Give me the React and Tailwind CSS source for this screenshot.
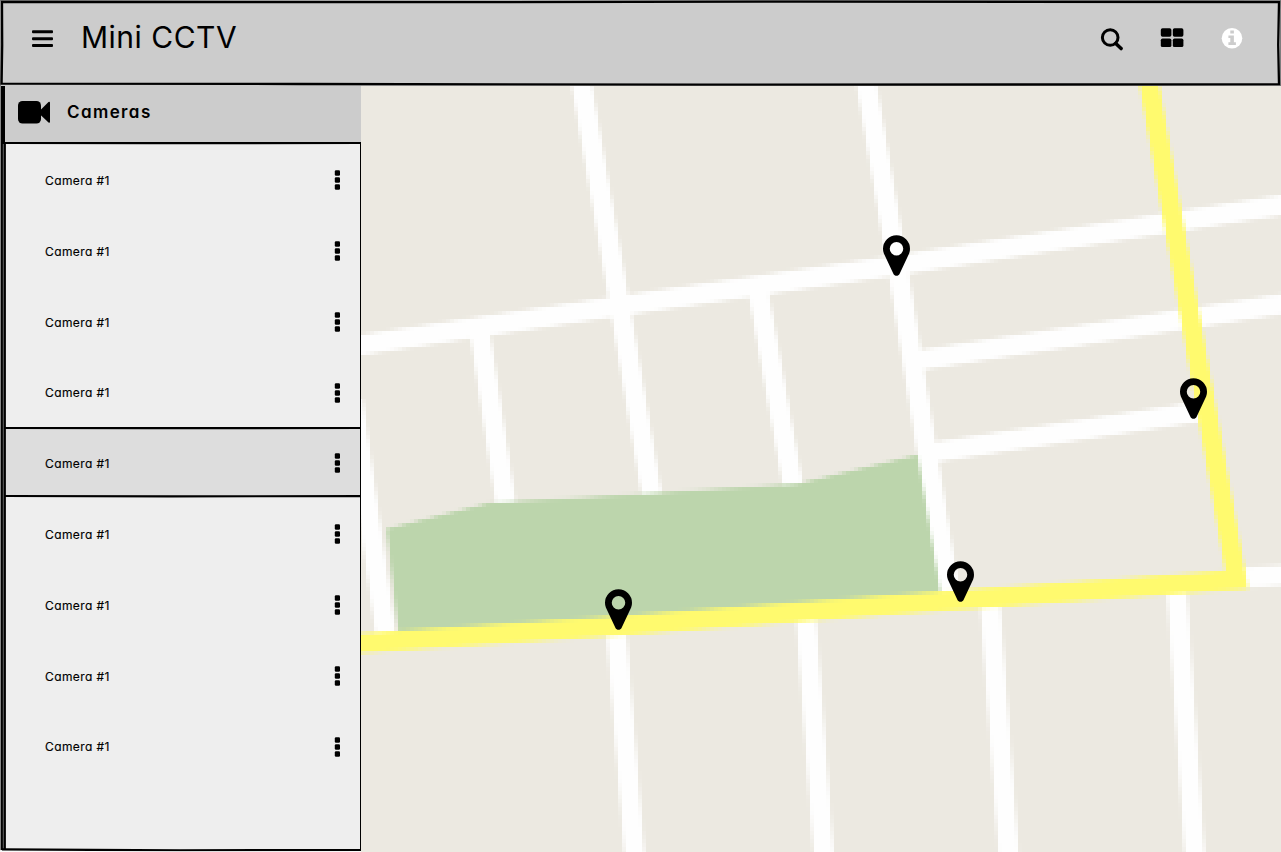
import React from "react";

const FONT = "font-['Inter','Liberation_Sans',sans-serif]";

function Pin({ className }) {
  return (
    <svg viewBox="0 -1408 1024 1536" className={"absolute h-[41px] w-[27px] " + className}>
      <path
        transform="scale(1,-1)"
        d="M768 896q0 106-75 181t-181 75-181-75-75-181 75-181 181-75 181 75 75 181zm256 0q0-109-33-179l-364-774q-16-33-47.5-52t-67.5-19-67.5 19-46.5 52l-365 774q-33 70-33 179 0 212 150 362t362 150 362-150 150-362z"
      />
    </svg>
  );
}

function Dots() {
  return (
    <svg viewBox="0 0 6 20" className="mb-px h-5 w-1.5">
      <rect width="5.2" height="5.4" rx="1.2" x=".8" y=".3" />
      <rect width="5.2" height="5.4" rx="1.2" x=".8" y="7.3" />
      <rect width="5.2" height="5.4" rx="1.2" x=".8" y="14.3" />
    </svg>
  );
}

function Row({ className }) {
  return (
    <li className={"flex items-center justify-between pl-[39px] pr-[21.5px] " + className}>
      <span className="text-[12px] leading-4 tracking-[0.4px] [-webkit-text-stroke:0.15px_black] [font-feature-settings:'cv11']">Camera #1</span>
      <Dots />
    </li>
  );
}

function Header() {
  return (
    <header className="relative flex h-[86px] shrink-0 items-start bg-[#cccccc]">
      <svg viewBox="0 0 1281 86" className="absolute inset-0 h-[86px] w-[1281px]" fill="none" stroke="#000">
        <path d="M0 .6 500 1.2 1281 .4M0 0 .4 86M1280.6 0V86" stroke="#777" strokeWidth="1" />
        <path d="M2 2 420 2.2 800 1.6 1279 2.2 1278.2 45 1279 84.4 700 84.6 300 84 1.6 83.7 2.2 45Z" strokeWidth="2.3" />
      </svg>
      <svg viewBox="0 0 21 18" className="ml-[31.5px] mt-[30px] h-[18px] w-[21px]">
        <rect width="21" height="3" y=".2" rx="1" />
        <rect width="21" height="3" y="7.2" rx="1" />
        <rect width="21" height="3" y="14" rx="1" />
      </svg>
      <h1 className="ml-[28.5px] mt-[17px] whitespace-nowrap text-[30px] font-normal leading-10 tracking-[0.5px]">Mini CCTV</h1>
      <div className="ml-auto mr-[37px] mt-[27px] flex items-center">
        <svg viewBox="0 0 24 24" className="mr-[36px] h-6 w-6" fill="none" stroke="#000">
          <circle cx="10.2" cy="10.5" r="7.8" strokeWidth="3" />
          <path d="m15.8 16.4 5.3 5.2" strokeWidth="3.5" strokeLinecap="round" />
        </svg>
        <svg viewBox="0 0 24 24" className="mr-[36px] h-6 w-6">
          <rect x=".8" y="1.2" width="10.6" height="8.5" rx="1.7" />
          <rect x="12.8" y="1.2" width="10.6" height="8.5" rx="1.7" />
          <rect x=".8" y="11.6" width="10.6" height="8.5" rx="1.7" />
          <rect x="12.8" y="11.6" width="10.6" height="8.5" rx="1.7" />
        </svg>
        <svg viewBox="0 0 24 24" className="h-6 w-6">
          <circle cx="12" cy="11.3" r="10.3" fill="#fff" />
          <path d="M10.3 3.4h3.6v3.2h-3.6zM8.4 8.5h5.5v6.8h2v2.6H8.4v-2.6h1.9v-4.2H8.4z" fill="#ccc" />
        </svg>
      </div>
    </header>
  );
}

function Sidebar() {
  return (
    <aside className="relative flex w-[361px] shrink-0 flex-col bg-[#eeeeee]">
      <div className="flex h-[57px] items-center bg-[#cccccc] pb-1.5 pl-[18px]">
        <svg viewBox="0 0 32 24" className="h-6 w-8">
          <rect y="1" width="23" height="22.6" rx="4.5" />
          <path d="M22 10.5 30.5 2q1.5-.8 1.5.8v19q0 1.6-1.5.8L22 14.5z" />
        </svg>
        <h2 className="ml-[17px] whitespace-nowrap text-[17px] font-semibold leading-6 tracking-[1.4px] [font-feature-settings:'cv11']">Cameras</h2>
      </div>
      <ul className="flex flex-col pl-1.5 pt-[2px]">
        <Row className="h-[71px]" />
        <Row className="h-[71px]" />
        <Row className="h-[71px]" />
        <Row className="h-[70px]" />
        <Row className="h-[69px] bg-[#dddddd] pt-0.5" />
        <Row className="h-[73px] pt-0.5" />
        <Row className="h-[71px]" />
        <Row className="h-[71px]" />
        <Row className="h-[70px]" />
      </ul>
      <svg viewBox="0 0 361 766" className="absolute inset-0 h-[766px] w-[361px]" fill="none" stroke="#000">
        <path d="M0 0h5V764H0z" fill="#000" stroke="none" />
        <path d="M.5 0V764" stroke="#888" />
        <path d="M3.3 58V764" stroke="#aaa" strokeWidth=".6" />
        <path d="M5 57 150 57.2 361 57M5 342 150 342.2 361 342M5 410 170 410.4 361 410.1M2 763.3 180 764.3 361 764" strokeWidth="2.2" />
        <path d="M5.3 57V763" strokeWidth="1.2" />
        <path d="M360.5 57V764" strokeWidth="1" />
        <path d="M0 765.8H361" stroke="#fff" />
      </svg>
    </aside>
  );
}

function CityMap() {
  return (
    <main className="relative h-[766px] min-w-0 flex-1 overflow-hidden bg-[#ece9e1]">
      <svg viewBox="361 86 920 766" className="block h-[766px] w-[920px]" fill="none">
        {/* Samples the drawing into 4px blocks, as in a low-resolution map tile */}
        <filter id="tiles" filterUnits="userSpaceOnUse" x="357" y="82" width="928" height="774" colorInterpolationFilters="sRGB">
          <feGaussianBlur in="SourceGraphic" stdDeviation="1" result="soft" />
          <feFlood x="358" y="83" width="1" height="1" floodColor="#000" />
          <feComposite x="357" y="82" width="4" height="4" />
          <feTile result="grid" />
          <feComposite in="soft" in2="grid" operator="in" result="a" />
          <feOffset in="a" dx="1" dy="0" result="a1" />
          <feMerge result="b"><feMergeNode in="a" /><feMergeNode in="a1" /></feMerge>
          <feOffset in="b" dx="2" dy="0" result="b1" />
          <feMerge result="c"><feMergeNode in="b" /><feMergeNode in="b1" /></feMerge>
          <feOffset in="c" dx="0" dy="1" result="c1" />
          <feMerge result="d"><feMergeNode in="c" /><feMergeNode in="c1" /></feMerge>
          <feOffset in="d" dx="0" dy="2" result="d1" />
          <feMerge><feMergeNode in="d" /><feMergeNode in="d1" /></feMerge>
        </filter>
        <g filter="url(#tiles)">
          <path d="M340 60H1300V880H340z" fill="#ece9e1" />
          <g transform="translate(-1.700 -1.700)">
            <g stroke="#fefefe" strokeWidth="20">
              <path d="M581 80 614 270 652 495" />
              <path d="M866 80 898 268 950 595" />
              <path d="M345 347.5 620 306 900 265 1300 202.500" />
              <path d="M480 332 506 503M758 289 793 485" />
              <path d="M915 361 1300 301.500M930 453 1205 411" />
              <path d="M353 400 386 635M1238 578 1300 574.500" />
              <path d="M616 625 636 870M806 615 825 870M990 600 1010 870M1177 590 1196 870" />
            </g>
            <path d="M387 529 490 503 580 498 798 484 918 455 942 600 700 622 399 636Z" fill="#bcd5ac" />
            <path d="M345 644.500 620 626 900 604.500 1237 580 1198 360 1148 76" stroke="#fffa6e" strokeWidth="19.500" />
          </g>
        </g>
      </svg>
      <Pin className="left-[522px] top-[149px]" />
      <Pin className="left-[819px] top-[292px]" />
      <Pin className="left-[244px] top-[503px]" />
      <Pin className="left-[586px] top-[475px]" />
    </main>
  );
}

export default function App() {
  return (
    <div className={"flex h-[852px] w-[1281px] flex-col overflow-hidden bg-white text-black " + FONT}>
      <Header />
      <div className="flex flex-1">
        <Sidebar />
        <CityMap />
      </div>
    </div>
  );
}
